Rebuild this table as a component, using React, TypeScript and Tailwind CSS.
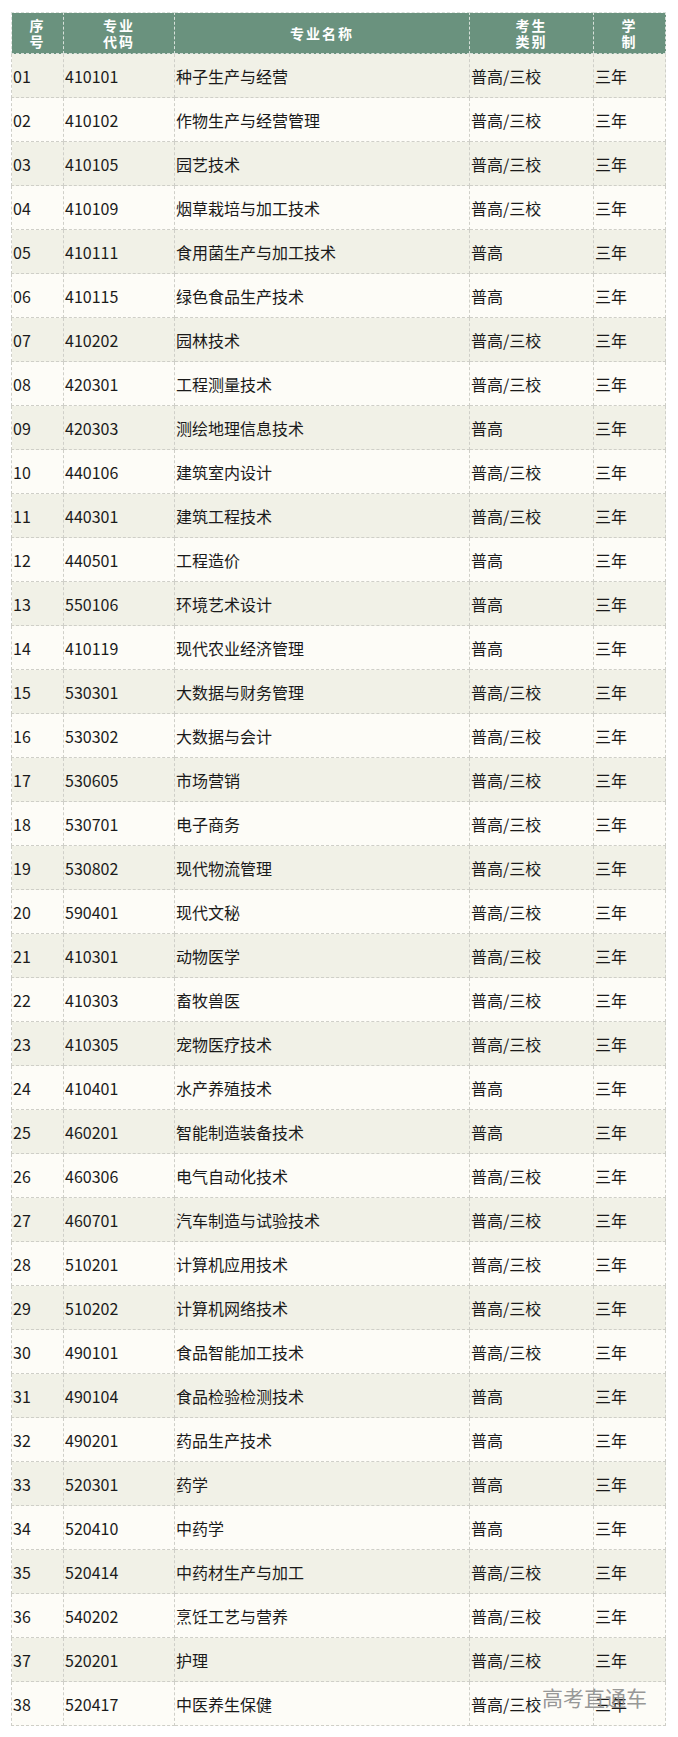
const rows: [string, string, string, string][] = [
  ["01", "410101", "种子生产与经营", "普高/三校"],
  ["02", "410102", "作物生产与经营管理", "普高/三校"],
  ["03", "410105", "园艺技术", "普高/三校"],
  ["04", "410109", "烟草栽培与加工技术", "普高/三校"],
  ["05", "410111", "食用菌生产与加工技术", "普高"],
  ["06", "410115", "绿色食品生产技术", "普高"],
  ["07", "410202", "园林技术", "普高/三校"],
  ["08", "420301", "工程测量技术", "普高/三校"],
  ["09", "420303", "测绘地理信息技术", "普高"],
  ["10", "440106", "建筑室内设计", "普高/三校"],
  ["11", "440301", "建筑工程技术", "普高/三校"],
  ["12", "440501", "工程造价", "普高"],
  ["13", "550106", "环境艺术设计", "普高"],
  ["14", "410119", "现代农业经济管理", "普高"],
  ["15", "530301", "大数据与财务管理", "普高/三校"],
  ["16", "530302", "大数据与会计", "普高/三校"],
  ["17", "530605", "市场营销", "普高/三校"],
  ["18", "530701", "电子商务", "普高/三校"],
  ["19", "530802", "现代物流管理", "普高/三校"],
  ["20", "590401", "现代文秘", "普高/三校"],
  ["21", "410301", "动物医学", "普高/三校"],
  ["22", "410303", "畜牧兽医", "普高/三校"],
  ["23", "410305", "宠物医疗技术", "普高/三校"],
  ["24", "410401", "水产养殖技术", "普高"],
  ["25", "460201", "智能制造装备技术", "普高"],
  ["26", "460306", "电气自动化技术", "普高/三校"],
  ["27", "460701", "汽车制造与试验技术", "普高/三校"],
  ["28", "510201", "计算机应用技术", "普高/三校"],
  ["29", "510202", "计算机网络技术", "普高/三校"],
  ["30", "490101", "食品智能加工技术", "普高/三校"],
  ["31", "490104", "食品检验检测技术", "普高"],
  ["32", "490201", "药品生产技术", "普高"],
  ["33", "520301", "药学", "普高"],
  ["34", "520410", "中药学", "普高"],
  ["35", "520414", "中药材生产与加工", "普高/三校"],
  ["36", "540202", "烹饪工艺与营养", "普高/三校"],
  ["37", "520201", "护理", "普高/三校"],
  ["38", "520417", "中医养生保健", "普高/三校"],
];

const th =
  "border border-dashed border-[#d8e0da] text-center align-middle font-bold text-white text-[14px] leading-[16px] tracking-[2px] p-0";
const td =
  "border border-dashed border-[#cfcfc8] align-middle text-left text-[16px] text-[#1a1a1a] pl-[1px] py-0 h-[44px]";

export default function App() {
  return (
    <div
      className="relative w-[678px] h-[1737px] bg-white pt-[12px] pl-[11px]"
      style={{ fontFamily: '"Noto Sans CJK SC", "Noto Sans", sans-serif' }}
    >
      <table className="w-[654px] border-collapse table-fixed">
        <colgroup>
          <col className="w-[52px]" />
          <col className="w-[111px]" />
          <col className="w-[295px]" />
          <col className="w-[124px]" />
          <col className="w-[72px]" />
        </colgroup>
        <thead>
          <tr className="bg-[#6a927e] h-[41px]">
            <th className={th}>
              序<br />号
            </th>
            <th className={th}>
              专业<br />代码
            </th>
            <th className={th}>专业名称</th>
            <th className={th}>
              考生<br />类别
            </th>
            <th className={th}>
              学<br />制
            </th>
          </tr>
        </thead>
        <tbody>
          {rows.map((r, i) => (
            <tr key={r[0]} className={i % 2 === 0 ? "bg-[#f1f1e7]" : "bg-[#fdfcf7]"}>
              <td className={td}>{r[0]}</td>
              <td className={td}>{r[1]}</td>
              <td className={td}>{r[2]}</td>
              <td className={td}>{r[3]}</td>
              <td className={td}>三年</td>
            </tr>
          ))}
        </tbody>
      </table>
      <div className="absolute left-[542px] top-[1683px] text-[21px] leading-[28px] text-[#8a8a8a]/90 tracking-[0px]">
        高考直通车
      </div>
    </div>
  );
}
